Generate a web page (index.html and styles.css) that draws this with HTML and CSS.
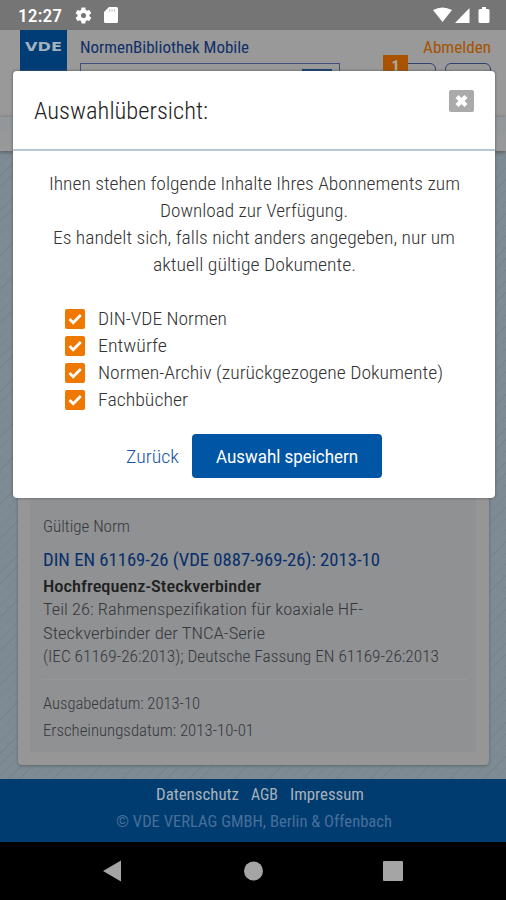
FILE: index.html
```html
<!DOCTYPE html>
<html lang="de">
<head>
<meta charset="utf-8">
<title>NormenBibliothek Mobile</title>
<link rel="stylesheet" href="styles.css">
</head>
<body>
<div class="statusbar">
  <span class="clock fit" data-w="44">12:27</span>
  <svg class="gear" viewBox="0 0 24 24"><path fill="#fff" fill-rule="evenodd" d="M19.4 13a7.6 7.6 0 0 0 0-2l2.1-1.6c.2-.2.3-.5.1-.7l-2-3.4c-.1-.3-.4-.3-.6-.3l-2.5 1a7 7 0 0 0-1.7-1L14.4 2.400c0-.2-.2-.4-.5-.4h-4c-.2 0-.4.200-.5.400L9 5a8 8 0 0 0-1.700 1l-2.500-1c-.2 0-.5 0-.6.300l-2 3.400c-.1.200 0 .5.100.700L4.500 11a7.600 7.600 0 0 0 0 2l-2.200 1.600c-.1.200-.2.500-.1.700l2 3.400c.1.300.4.300.6.300l2.500-1a7 7 0 0 0 1.700 1l.4 2.600c.1.200.3.400.5.400h4c.3 0 .5-.2.500-.4l.4-2.600a8 8 0 0 0 1.700-1l2.500 1c.2 0 .5 0 .6-.3l2-3.400c.2-.2.100-.5-.1-.7zM12 15.200a3.200 3.200 0 1 1 0-6.400 3.200 3.200 0 0 1 0 6.400z"/></svg>
  <svg class="sdcard" viewBox="0 0 14 16"><path fill="#fff" d="M5 0h7.500Q14 0 14 1.500v13q0 1.500-1.500 1.500h-11Q0 16 0 14.500V5z"/><path stroke="#ccc" stroke-width="1.200" d="M5.500 2v3M8 2v3M10.500 2v3"/></svg>
  <svg class="signals" viewBox="0 0 57 17"><path fill="#fff" d="M0 3Q9.500-2 19 3L9.500 15zM22 16 36.500 1v15zM47 2h2V0h4v2h2q1.500 0 1.500 1.500v11q0 1.500-1.500 1.500h-8q-1.500 0-1.500-1.500v-11Q45.500 2 47 2z"/></svg>
</div>
<div class="app">
  <header class="header">
    <div class="logo"><span class="fit" data-w="37">VDE</span></div>
    <div class="headmain">
      <div class="headline"><span class="fit" data-w="169">NormenBibliothek Mobile</span><span class="logout fit" data-w="68">Abmelden</span></div>
      <div class="tools"><div class="search"><i></i></div><div class="tool first"><b>1</b></div><div class="tool"></div></div>
    </div>
  </header>
  <div class="subhead"></div>
  <main class="content">
    <article class="card">
      <div class="norm">
        <p class="kind"><span class="fit" data-w="87">Gültige Norm</span></p>
        <h2><span class="fit" data-w="337">DIN EN 61169-26 (VDE 0887-969-26): 2013-10</span></h2>
        <h3><span class="fit" data-w="218">Hochfrequenz-Steckverbinder</span></h3>
        <p class="desc"><span class="fit" data-w="320">Teil 26: Rahmenspezifikation für koaxiale HF-</span><br><span class="fit" data-w="222">Steckverbinder der TNCA-Serie</span><br><span class="fit" data-w="396">(IEC 61169-26:2013); Deutsche Fassung EN 61169-26:2013</span></p>
        <p class="dates"><span class="fit" data-w="157">Ausgabedatum: 2013-10</span><br><span class="fit" data-w="211">Erscheinungsdatum: 2013-10-01</span></p>
      </div>
    </article>
  </main>
  <footer class="footer">
    <nav><span class="fit" data-w="83">Datenschutz</span><span class="fit" data-w="27">AGB</span><span class="fit" data-w="74">Impressum</span></nav>
    <p><span class="fit" data-w="276">© VDE VERLAG GMBH, Berlin &amp; Offenbach</span></p>
  </footer>
  <section class="modal">
    <div class="modalhead"><h1><span class="fit" data-w="174">Auswahlübersicht:</span></h1>
      <button class="close"><svg viewBox="0 0 25 22"><path d="m8 6.500 9 9m0-9-9 9" stroke="#fff" stroke-width="4.400"/></svg></button>
    </div>
    <p class="intro"><span class="fit" data-w="411">Ihnen stehen folgende Inhalte Ihres Abonnements zum</span><br><span class="fit" data-w="188">Download zur Verfügung.</span><br><span class="fit" data-w="402">Es handelt sich, falls nicht anders angegeben, nur um</span><br><span class="fit" data-w="203">aktuell gültige Dokumente.</span></p>
    <ul class="choices">
      <li><svg viewBox="0 0 20 20"><path d="m4.500 10 3.700 3.700 7.600-7.700"/></svg><span class="fit" data-w="129">DIN-VDE Normen</span></li>
      <li><svg viewBox="0 0 20 20"><path d="m4.500 10 3.700 3.700 7.600-7.700"/></svg><span class="fit" data-w="69">Entwürfe</span></li>
      <li><svg viewBox="0 0 20 20"><path d="m4.500 10 3.700 3.700 7.600-7.700"/></svg><span class="fit" data-w="345">Normen-Archiv (zurückgezogene Dokumente)</span></li>
      <li><svg viewBox="0 0 20 20"><path d="m4.500 10 3.700 3.700 7.600-7.700"/></svg><span class="fit" data-w="90">Fachbücher</span></li>
    </ul>
    <div class="actions"><a><span class="fit" data-w="53">Zurück</span></a><button class="save"><span class="fit" data-w="142">Auswahl speichern</span></button></div>
  </section>
</div>
<div class="navbar"><svg viewBox="0 0 506 58"><g fill="#a5a5a5"><path d="M103 29 121 18.500V39.500zM384 19h18q1 0 1 1v18q0 1-1 1h-18q-1 0-1-1V20q0-1 1-1z"/><circle cx="253.500" cy="29" r="9.500"/></g></svg></div>
<script src="fit.js"></script>
</body>
</html>
```
FILE: styles.css
```css
* { box-sizing: border-box; margin: 0; padding: 0; }
body { width: 506px; height: 900px; overflow: hidden; display: flex; flex-direction: column; background: #000; font-family: Roboto, "Liberation Sans", sans-serif; font-stretch: 75%; color: #333; }
.fit { display: inline-block; white-space: nowrap; text-align: left; }
.fit > span { display: inline-block; transform-origin: 0 50%; }
.statusbar { height: 30px; flex: none; background: #757575; display: flex; align-items: center; padding: 0 16px 0 18px; }
.clock { font-size: 18px; font-weight: 500; color: #fff; line-height: 30px; padding-top: 1px; }
.gear { width: 19px; height: 19px; margin-left: 12px; }
.sdcard { width: 14px; height: 16px; margin-left: 11px; }
.signals { width: 57px; height: 17px; margin-left: auto; }
.app { position: relative; height: 812px; flex: none; display: flex; flex-direction: column; background: repeating-linear-gradient(135deg, transparent 0 7px, #76858e 7px 8px), #7e8b94; }
.header { height: 87px; flex: none; background: #999; display: flex; padding: 0 16px 0 20px; }
.logo { width: 47px; height: 61px; flex: none; background: #003d77; color: #a6b0bb; font: bold 12px/34px "DejaVu Sans", sans-serif; padding-left: 5px; }
.headmain { flex: 1; padding-left: 13px; }
.headline { display: flex; justify-content: space-between; font-size: 16px; line-height: 33px; height: 33px; padding-top: 1px; color: #102f68; }
.logout { color: #a75300; }
.tools { display: flex; }
.search { width: 260px; height: 40px; flex: none; border: 1px solid #414e7c; display: flex; justify-content: flex-end; padding: 5px 7px; }
.search i { width: 30px; height: 25px; background: #123a76; }
.tool { width: 46px; height: 36px; flex: none; border: 1.500px solid #31416f; border-radius: 6px; margin-left: 9px; position: relative; }
.first { margin-left: 50px; }
.first b { position: absolute; left: -8px; top: -9px; width: 25px; height: 25px; background: #a95300; color: #aaa; font-size: 16px; line-height: 24px; text-align: center; }
.subhead { height: 34px; flex: none; background: linear-gradient(#92979a, #999); box-shadow: 0 1px 4px #555; }
.content { height: 628px; flex: none; padding: 0 17px 14px 18px; display: flex; }
.card { flex: 1; background: #969696; border-radius: 0 0 4px 4px; padding: 0 13px 13px 12px; box-shadow: 0 1px 3px #59636a; }
.norm { height: 100%; background: #8f9193; padding: 333px 8px 0 13px; color: #36383b; }
.norm .kind { margin-top: 29px; font-size: 16px; line-height: 27px; font-weight: 300; }
.norm h2 { font-size: 18.500px; line-height: 38px; font-weight: 400; color: #072f6b; padding-top: 1px; margin-bottom: -1px; }
.norm h3 { font-size: 17px; line-height: 17px; font-weight: 500; color: #202020; margin-bottom: 3px; }
.desc { font-size: 17px; line-height: 23.500px; font-weight: 300; padding-bottom: 10px; border-bottom: 1px solid #969696; }
.dates { font-size: 16px; line-height: 27px; font-weight: 300; padding-top: 10px; }
.desc .fit, .dates .fit, .intro .fit { vertical-align: top; }
.footer { height: 63px; flex: none; background: #003c70; text-align: center; padding-top: 2px; }
.footer nav { display: flex; justify-content: center; gap: 12px; padding-left: 14px; font-size: 17px; line-height: 27px; color: #a9b1b9; }
.footer p { font-size: 17px; line-height: 27px; color: #476f9b; padding-left: 2px; }
.modal { position: absolute; left: 13px; top: 41px; width: 482px; height: 427px; background: #fff; border-radius: 4px; box-shadow: 0 0 3px #555; color: #333; }
.modalhead { height: 80px; border-bottom: 2px solid #b9c6d3; display: flex; justify-content: space-between; padding: 0 21px; }
.modalhead h1 { font-size: 24px; line-height: 81px; font-weight: 300; color: #222; }
.close { width: 25px; height: 22px; margin-top: 19px; border: 0; border-radius: 2px; background: #aaa; }
.close svg { width: 25px; height: 22px; display: block; }
.intro { font-size: 19px; line-height: 27px; font-weight: 300; text-align: center; padding-top: 19px; }
.choices { list-style: none; padding: 27px 0 0 52px; font-size: 19px; font-weight: 300; }
.choices li { height: 27px; display: flex; align-items: center; gap: 13px; }
.choices svg { width: 20px; height: 20px; background: #ee7800; border-radius: 2px; }
.choices path { fill: none; stroke: #fff; stroke-width: 2.800; }
.actions { display: flex; align-items: center; padding: 21px 0 0 113px; gap: 14px; }
.actions a { color: #1853a4; font-size: 19px; font-weight: 300; width: 52px; }
.save { width: 190px; height: 44px; border: 0; border-radius: 4px; background: #0055a5; color: #fff; font: 400 19px Roboto, sans-serif; }
.navbar { height: 58px; flex: none; background: #000; }
.navbar svg { display: block; width: 506px; height: 58px; }
```
FILE: fit.js
```js
// Condense each line of text horizontally to its design width.
document.querySelectorAll('.fit').forEach(function (el) {
  var inner = document.createElement('span');
  while (el.firstChild) inner.appendChild(el.firstChild);
  el.appendChild(inner);
  var natural = inner.getBoundingClientRect().width;
  el.style.width = el.dataset.w + 'px';
  inner.style.transform = 'scaleX(' + el.dataset.w / natural + ')';
});
```
